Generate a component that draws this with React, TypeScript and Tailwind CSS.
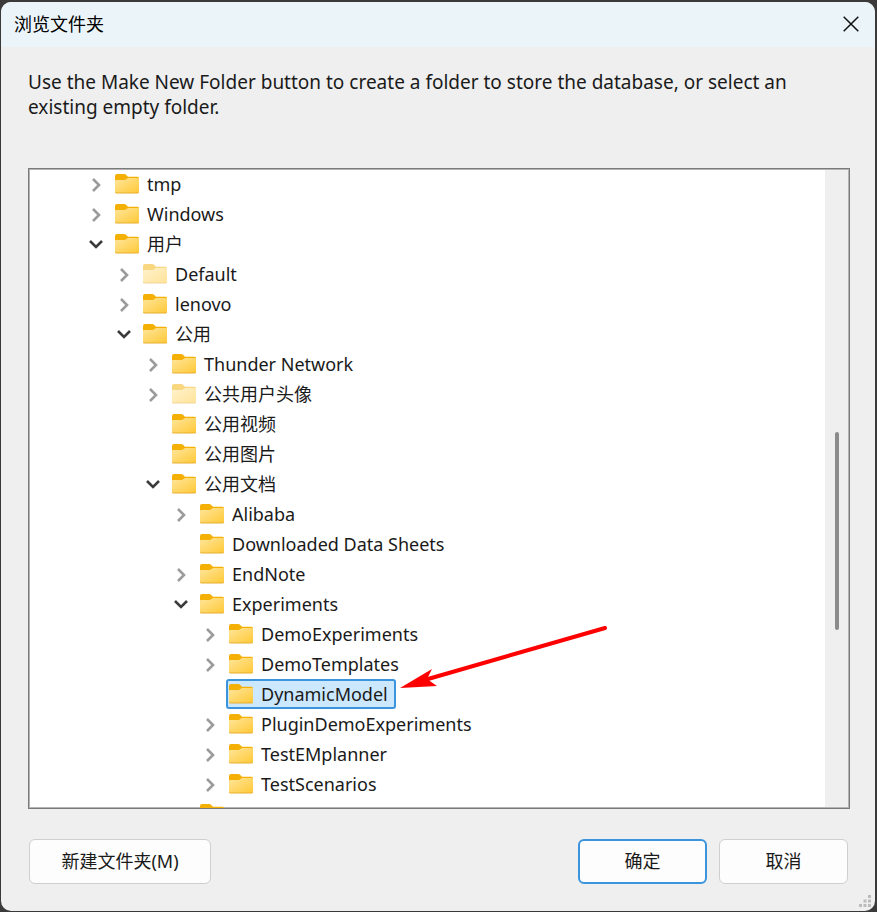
import { useState } from "react";

type Node = {
  name: string;
  depth: 0 | 1 | 2 | 3 | 4;
  arrow?: "open" | "closed";
  faded?: boolean;
};

const nodes: Node[] = [
  { name: "tmp", depth: 0, arrow: "closed" },
  { name: "Windows", depth: 0, arrow: "closed" },
  { name: "用户", depth: 0, arrow: "open" },
  { name: "Default", depth: 1, arrow: "closed", faded: true },
  { name: "lenovo", depth: 1, arrow: "closed" },
  { name: "公用", depth: 1, arrow: "open" },
  { name: "Thunder Network", depth: 2, arrow: "closed" },
  { name: "公共用户头像", depth: 2, arrow: "closed", faded: true },
  { name: "公用视频", depth: 2 },
  { name: "公用图片", depth: 2 },
  { name: "公用文档", depth: 2, arrow: "open" },
  { name: "Alibaba", depth: 3, arrow: "closed" },
  { name: "Downloaded Data Sheets", depth: 3 },
  { name: "EndNote", depth: 3, arrow: "closed" },
  { name: "Experiments", depth: 3, arrow: "open" },
  { name: "DemoExperiments", depth: 4, arrow: "closed" },
  { name: "DemoTemplates", depth: 4, arrow: "closed" },
  { name: "DynamicModel", depth: 4 },
  { name: "PluginDemoExperiments", depth: 4, arrow: "closed" },
  { name: "TestEMplanner", depth: 4, arrow: "closed" },
  { name: "TestScenarios", depth: 4, arrow: "closed" },
];

const indent = ["pl-[59px]", "pl-[87px]", "pl-[116px]", "pl-[144px]", "pl-[173px]"];

function FolderIcon({ faded = false }: { faded?: boolean }) {
  return (
    <svg width="24" height="20" viewBox="0 0 24 20" className={faded ? "shrink-0 opacity-50" : "shrink-0"} aria-hidden="true">
      <defs>
        <linearGradient id="folder" x1="0" y1="0" x2="1" y2="1">
          <stop offset="0" stopColor="#ffe69c" />
          <stop offset="1" stopColor="#ffc938" />
        </linearGradient>
      </defs>
      <path d="M0 2a2 2 0 0 1 2-2h7.2c.8 0 1.3.3 1.800.8L13 2.800h9.500a1.500 1.500 0 0 1 1.500 1.500V10H0Z" fill="#f4b004" />
      <path d="M0 7a1 1 0 0 1 1-1h8.500c.7 0 1.200-.2 1.700-.7l.7-.6c.4-.4.900-.6 1.500-.6H23a1 1 0 0 1 1 1V18a1.500 1.500 0 0 1-1.500 1.500h-21A1.500 1.500 0 0 1 0 18Z" fill="#e8ae2c" />
      <path d="M0 7a1 1 0 0 1 1-1h8.500c.7 0 1.200-.2 1.700-.7l.7-.6c.4-.4.900-.6 1.500-.6H23a1 1 0 0 1 1 1V17a1.500 1.500 0 0 1-1.500 1.500h-21A1.500 1.500 0 0 1 0 17Z" fill="url(#folder)" />
    </svg>
  );
}

function Chevron({ open }: { open: boolean }) {
  return open ? (
    <svg width="16" height="16" viewBox="0 0 16 16" fill="none" aria-hidden="true">
      <path d="M2 5l6 6 6-6" stroke="#3b3b3b" strokeWidth="2.600" />
    </svg>
  ) : (
    <svg width="16" height="16" viewBox="0 0 16 16" fill="none" aria-hidden="true">
      <path d="M5 3l6 6-6 6" stroke="#9b9b9b" strokeWidth="2.600" />
    </svg>
  );
}

export default function App() {
  const [selected, setSelected] = useState("DynamicModel");

  return (
    <div className="h-screen min-h-[500px] bg-[#3a3a3a] pt-0.5 pr-0.5 pb-px pl-px font-['Noto_Sans','Noto_Sans_CJK_SC',sans-serif] text-lg text-[#1a1a1a]">
      <main className="relative flex h-full flex-col overflow-hidden rounded-[10px] bg-[#efefef]">
        <header className="flex h-[45px] shrink-0 items-center justify-between bg-[#ebf5f9] pr-4 pb-0.5 pl-[13px]">
          <h1 className="pb-0.5 font-['Noto_Sans_CJK_SC',sans-serif] text-lg leading-5 text-black">浏览文件夹</h1>
          <button type="button" aria-label="Close" className="flex h-4 w-4 items-center justify-center">
            <svg width="16" height="16" viewBox="0 0 16 16" aria-hidden="true">
              <path d="M.7.7l14.600 14.600M15.300.7L.7 15.300" stroke="#111" strokeWidth="1.500" />
            </svg>
          </button>
        </header>

        <section className="flex min-h-0 flex-1 flex-col pt-[23px] pr-[25px] pb-[27px] pl-[27px]">
          <p className="mb-12 max-w-[780px] text-[19px] leading-[25px]">
            Use the Make New Folder button to create a folder to store the database, or select an existing empty folder.
          </p>

          <div className="flex min-h-0 flex-1 overflow-hidden border border-[#7a7a7a] bg-white outline -outline-offset-2 outline-[#b4b4b4]">
            <div className="relative min-w-0 flex-1 overflow-hidden">
              <ul role="tree" aria-label="Folders">
                {nodes.map((node) => {
                  const active = node.name === selected;
                  return (
                    <li
                      key={node.name}
                      role="treeitem"
                      aria-selected={active}
                      className={`flex h-[30px] items-center ${indent[node.depth]}`}
                    >
                      <span className="flex w-6 shrink-0">
                        {node.arrow && (
                          <button type="button" aria-label={`Toggle ${node.name}`}>
                            <Chevron open={node.arrow === "open"} />
                          </button>
                        )}
                      </span>
                      <button
                        type="button"
                        onClick={() => setSelected(node.name)}
                        className={`flex h-[30px] items-center gap-2 rounded-[3px] border-2 pr-1.5 pl-px whitespace-nowrap ${
                          active ? "border-[#3c94dc] bg-[#cce8ff]" : "border-transparent"
                        }`}
                      >
                        <FolderIcon faded={node.faded} />
                        <span className="leading-6">{node.name}</span>
                      </button>
                    </li>
                  );
                })}
                <li className="flex h-[30px] items-center pl-[171px]">
                  <FolderIcon />
                </li>
              </ul>
              <svg width="208" height="66" viewBox="0 0 208 66" className="absolute top-[454px] left-[371px]" aria-hidden="true">
                <path d="M28 56L205 5" stroke="#fe0000" strokeWidth="4" strokeLinecap="round" />
                <path d="M0 65L32 46L27 56L37 63Z" fill="#fe0000" />
              </svg>
            </div>
            <div className="flex w-6 shrink-0 flex-col items-center bg-[#efefef]">
              <div className="h-[263px] shrink" />
              <div className="h-[198px] w-1 rounded-full bg-[#8b8b8b]" />
            </div>
          </div>

          <footer className="mt-[30px] flex shrink-0 gap-3 pr-0.5 pl-px">
            <button type="button" className="mr-auto h-[45px] w-[182px] rounded-md border border-[#cfcfcf] bg-[#fdfdfd] pb-0.5">
              新建文件夹(M)
            </button>
            <button type="button" className="h-[45px] w-[129px] rounded-md border-2 border-[#3c94dc] bg-[#fdfdfd] pb-0.5">
              确定
            </button>
            <button type="button" className="h-[45px] w-[129px] rounded-md border border-[#cfcfcf] bg-[#fdfdfd] pb-0.5">
              取消
            </button>
          </footer>
        </section>

        <svg width="12" height="12" viewBox="0 0 12 12" fill="#bdbdbd" className="absolute right-1 bottom-1" aria-hidden="true">
          <path d="M9 0h3v3H9zM4.500 4.500h3v3h-3zM9 4.500h3v3H9zM0 9h3v3H0zM4.500 9h3v3h-3zM9 9h3v3H9z" />
        </svg>
      </main>
    </div>
  );
}
